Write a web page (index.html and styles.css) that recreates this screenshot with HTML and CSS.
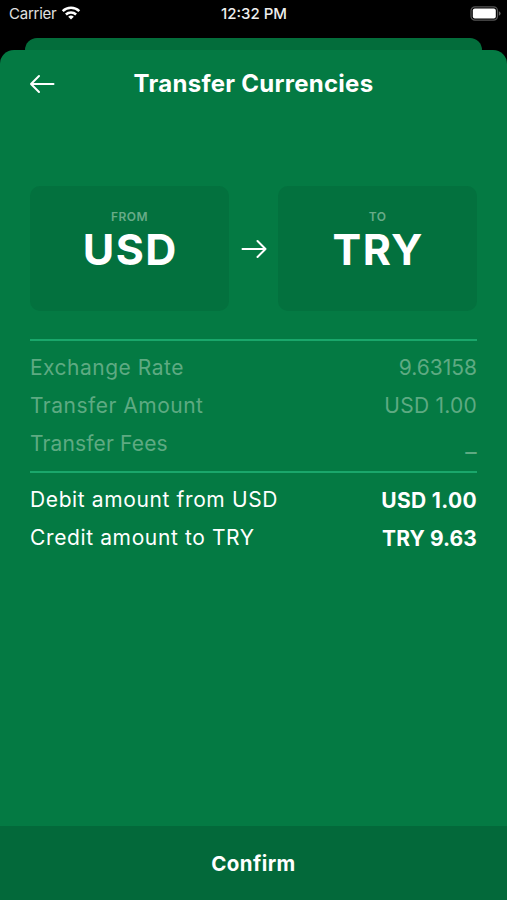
FILE: index.html
```html
<!DOCTYPE html>
<html lang="en">
<head>
<meta charset="utf-8">
<title>Transfer Currencies</title>
<link rel="stylesheet" href="styles.css">
</head>
<body>
<div class="phone">
  <header class="status">
    <div class="carrier"><span class="carrier-name">Carrier</span>
      <svg class="wifi" width="20" height="14" viewBox="0 0 20 14" fill="none" stroke="#fff" stroke-width="2.5"><path d="M1.7 5.2a12 12 0 0 1 16.6 0M4.9 8.5a7.3 7.3 0 0 1 10.2 0"/><path d="M10 13.6l-2.8-2.8a4 4 0 0 1 5.6 0z" fill="#fff" stroke="none"/></svg>
    </div>
    <div class="time">12:32 PM</div>
    <svg class="battery" width="32" height="15" viewBox="0 0 32 15"><rect x="1" y=".8" width="26.5" height="13.4" rx="4" fill="none" stroke="#555" stroke-width="1.2"/><rect x="2.8" y="2.6" width="23" height="9.8" rx="2" fill="#fff"/><path d="M28.9 5.2v4.6q1.7-.8 1.7-2.3t-1.7-2.3z" fill="#666"/></svg>
  </header>
  <div class="sheet-behind"></div>
  <main class="sheet">
    <div class="titlebar">
      <svg class="back" width="28" height="22" viewBox="0 0 28 22" fill="none" stroke="#fff" stroke-width="2" stroke-linecap="round" stroke-linejoin="round"><path d="M25.5 11H3M11 3l-8 8 8 8"/></svg>
      <h1 class="title">Transfer Currencies</h1>
    </div>
    <section class="pair">
      <div class="card"><span class="tag">FROM</span><span class="code">USD</span></div>
      <svg class="arrow" width="28" height="22" viewBox="0 0 28 22" fill="none" stroke="#fff" stroke-width="2" stroke-linecap="round" stroke-linejoin="round"><path d="M2.5 11h23M17.5 3l8 8-8 8"/></svg>
      <div class="card"><span class="tag">TO</span><span class="code">TRY</span></div>
    </section>
    <section class="details">
      <div class="row"><span class="label">Exchange Rate</span><span class="amount rate">9.63158</span></div>
      <div class="row"><span class="label">Transfer Amount</span><span class="amount">USD 1.00</span></div>
      <div class="row"><span class="label fees">Transfer Fees</span><span class="amount dash">_</span></div>
    </section>
    <section class="totals">
      <div class="row"><span class="label">Debit amount from USD</span><strong class="sum">USD 1.00</strong></div>
      <div class="row"><span class="label">Credit amount to TRY</span><strong class="sum credit">TRY 9.63</strong></div>
    </section>
    <button class="confirm">Confirm</button>
  </main>
</div>
</body>
</html>
```
FILE: styles.css
```css
* { box-sizing: border-box; }
body { margin: 0; background: #000; font-family: Inter, "Liberation Sans", sans-serif; color: #fff; }
.phone { width: 507px; height: 900px; display: flex; flex-direction: column; overflow: hidden; background: #000; }
.status { height: 38px; flex: none; display: grid; grid-template-columns: 1fr auto 1fr; align-items: start; padding: 6px 5px 0 9px; font-size: 15px; line-height: 16px; }
.carrier { display: flex; color: #e0e0e0; letter-spacing: -.25px; }
.wifi { margin-left: 5px; }
.time { font-weight: 500; color: #eee; margin-right: 3px; }
.battery { justify-self: end; }
.sheet-behind { flex: none; height: 24px; margin: 0 25px -12px; border-radius: 12px 12px 0 0; background: #036d3b; }
.sheet { flex: 1; min-height: 0; display: flex; flex-direction: column; background: #047a43; border-radius: 14px 14px 0 0; overflow: hidden; }
.titlebar { flex: none; height: 136px; padding: 19px 28px 0; display: grid; grid-template-columns: 28px 1fr 28px; align-items: start; }
.back { margin-top: 4px; }
.title { margin: 0; font-size: 24px; line-height: 29px; font-weight: 700; letter-spacing: .27px; text-align: center; }
.pair { flex: none; height: 125px; margin: 0 30px; display: grid; grid-template-columns: 199px 1fr 199px; justify-items: center; }
.card { width: 100%; height: 125px; border-radius: 10px; background: #03713e; display: flex; flex-direction: column; align-items: center; padding-top: 23px; }
.tag { font-size: 12px; line-height: 16px; font-weight: 600; color: #68ab88; letter-spacing: .4px; }
.code { font-size: 43px; line-height: 48px; font-weight: 700; letter-spacing: 1.5px; margin-right: -1.5px; }
.arrow { align-self: center; }
.details, .totals { flex: none; margin: 0 30px; border-top: 2px solid #1aa76b; font-size: 21px; }
.details { margin-top: 28px; height: 132px; padding-top: 8px; color: #5eaa82; font-weight: 400; }
.totals { padding-top: 7px; }
.row { display: flex; justify-content: space-between; height: 38px; line-height: 38px; }
.label { letter-spacing: .62px; }
.details .label { letter-spacing: .5px; }
.details .fees { letter-spacing: .15px; }
.amount { letter-spacing: .25px; }
.rate { letter-spacing: 0; }
.dash { font-size: 25px; line-height: 36px; }
.sum { font-weight: 700; line-height: 41px; letter-spacing: .35px; }
.credit { letter-spacing: .1px; }
.totals .label { line-height: 39px; }
.confirm { flex: none; margin-top: auto; height: 74px; border: 0; padding: 2px 0 0; background: #03693a; color: #fff; font: 700 20.5px/28px Inter, "Liberation Sans", sans-serif; letter-spacing: .4px; }
```
